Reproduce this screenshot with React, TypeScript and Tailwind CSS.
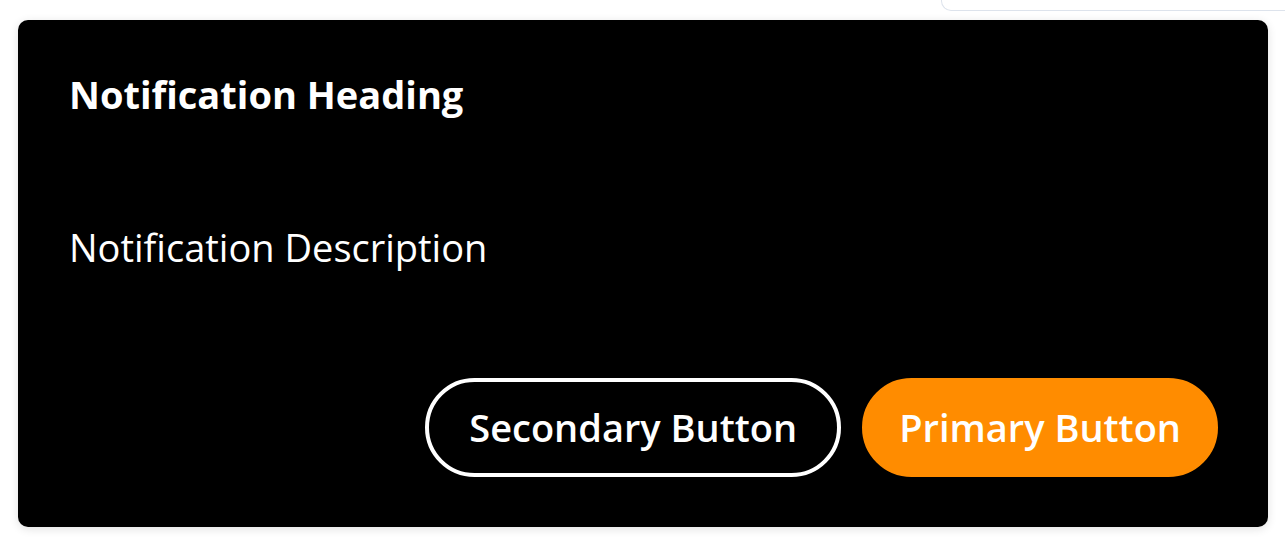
import React from 'react';

const font = { fontFamily: '"Open Sans", "Noto Sans", sans-serif' };

export default function App() {
  return (
    <div className="min-h-screen bg-white" style={font}>
      {/* partially visible panel at top right */}
      <div className="flex justify-end">
        <div className="h-[11px] w-[344px] rounded-bl-[10px] border-b border-l border-[#dde3ec] bg-white" />
      </div>

      <div className="ml-[18px] mt-[9px] flex h-[507px] w-[1250px] flex-col rounded-[10px] bg-black pb-[50px] pl-[51px] pr-[50px] pt-[50px] text-white shadow-[0_2px_10px_rgba(0,0,0,0.12)]">
        <h2 className="text-[38px] font-bold leading-[48px]">Notification Heading</h2>
        <p className="mt-[105px] text-[38px] leading-[48px]">Notification Description</p>

        <div className="mt-auto flex justify-end gap-[21px]">
          <button className="flex h-[99px] items-center rounded-full border-[4px] border-white px-[40px] text-[38px] font-semibold text-white">
            Secondary Button
          </button>
          <button className="flex h-[99px] items-center rounded-full border-[4px] border-[#ff8c00] bg-[#ff8c00] px-[33px] text-[38px] font-semibold text-white">
            Primary Button
          </button>
        </div>
      </div>
    </div>
  );
}
